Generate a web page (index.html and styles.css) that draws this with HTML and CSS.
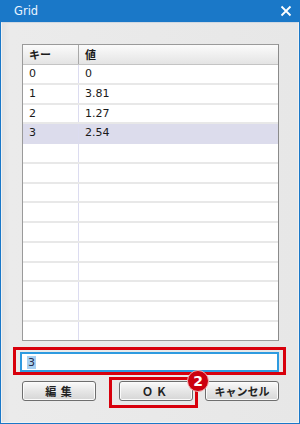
FILE: index.html
```html
<!DOCTYPE html>
<html>
<head>
<meta charset="utf-8">
<link rel="stylesheet" href="styles.css">
</head>
<body>
<div class="window">
  <div class="titlebar">
    <span class="title">Grid</span>
    <svg class="close" width="12" height="12" viewBox="0 0 12 12"><path d="M1.5 1.5 L10.5 10.5 M10.5 1.5 L1.5 10.5" stroke="#fff" stroke-width="1.8" fill="none"/></svg>
  </div>
  <div class="body">
    <div class="grid">
      <div class="row head"><div class="c1">キー</div><div class="c2">値</div></div>
      <div class="row"><div class="c1">0</div><div class="c2">0</div></div>
      <div class="row"><div class="c1">1</div><div class="c2">3.81</div></div>
      <div class="row"><div class="c1">2</div><div class="c2">1.27</div></div>
      <div class="row sel"><div class="c1">3</div><div class="c2">2.54</div></div>
      <div class="row"><div class="c1"></div><div class="c2"></div></div>
      <div class="row"><div class="c1"></div><div class="c2"></div></div>
      <div class="row"><div class="c1"></div><div class="c2"></div></div>
      <div class="row"><div class="c1"></div><div class="c2"></div></div>
      <div class="row"><div class="c1"></div><div class="c2"></div></div>
      <div class="row"><div class="c1"></div><div class="c2"></div></div>
      <div class="row"><div class="c1"></div><div class="c2"></div></div>
      <div class="row"><div class="c1"></div><div class="c2"></div></div>
      <div class="row"><div class="c1"></div><div class="c2"></div></div>
      <div class="row last"><div class="c1"></div><div class="c2"></div></div>
    </div>
    <div class="field"><span class="hl">3</span></div>
    <div class="buttons">
      <div class="btn">編 集</div>
      <div class="btn ok">ＯＫ<span class="badge">2</span></div>
      <div class="btn cancel">キャンセル</div>
    </div>
  </div>
</div>
</body>
</html>
```

FILE: styles.css
```css
* { box-sizing: border-box; }
html, body { margin: 0; padding: 0; }
body { width: 300px; height: 424px; overflow: hidden; font-family: "DejaVu Sans", "Noto Sans CJK JP", sans-serif; }
.window {
  width: 300px; height: 424px;
  background: #1a78c8;
  padding: 0 1px 1px 1px;
  display: flex; flex-direction: column;
}
.titlebar {
  height: 22px; flex: none;
  display: flex; align-items: center; justify-content: space-between;
  padding: 0 7px 0 13px;
}
.title { color: #eaf4ff; font-size: 11.5px; }
.close { display: block; }
.body {
  flex: 1;
  background: linear-gradient(to right, #e2e2e2 0, #ebebeb 8px, #e7e7e7 100%);
  border: 1px solid #f2f2f2;
  border-top-color: #cfd8e2;
  padding: 21px 19px 0 20px;
  display: flex; flex-direction: column;
}
.grid {
  height: 297px;
  border: 1px solid #9a9a9a;
  border-right-color: #8a8a8a;
  background: #fff;
  display: flex; flex-direction: column;
  overflow: hidden;
}
.row {
  display: flex; height: 19.75px; flex: none;
  border-bottom: 2px solid #e8e8e8;
  font-size: 11px; color: #1a1a1a;
}
.row.last { border-bottom: none; flex: 1; }
.row .c1 { width: 56px; border-right: 1px solid #dcdcf0; padding-left: 6px; line-height: 18px; }
.row .c2 { flex: 1; padding-left: 6px; line-height: 18px; }
.row.head {
  height: 20px;
  background: linear-gradient(#fbfbfb, #e4e4e4);
  border-bottom: 1px solid #c4c4c4;
  font-family: "Noto Sans CJK JP", sans-serif; font-weight: bold; font-size: 11px;
}
.row.head .c1 { border-right: 1px solid #a8a8a8; line-height: 19px; }
.row.head .c2 { line-height: 19px; }
.row.sel { background: #dcdcec; border-bottom-color: #dcdcec; }
.field {
  position: relative;
  margin: 11px 0 0 -2px;
  height: 20px;
  border: 2px solid #2e9be0;
  background: #fff;
  padding: 1px 0 0 5px;
  font-size: 11px; color: #2a2a4a; line-height: 15px;
}
.field::after {
  content: ""; position: absolute;
  left: -9px; top: -7px; right: -9px; bottom: -5px;
  border: 3px solid #d8000c;
}
.hl { background: #a6d0f2; padding: 0 1px; }
.buttons { display: flex; margin-top: 9px; height: 20px; }
.btn {
  position: relative;
  width: 74px; height: 20px;
  border: 1px solid #6e6e6e; border-radius: 3px;
  background: linear-gradient(#fafafa, #e6e6e6 50%, #d6d6d6);
  box-shadow: inset 0 0 0 1px #fbfbfb;
  font-family: "Noto Sans CJK JP", sans-serif; font-weight: bold; font-size: 11px; color: #222;
  display: flex; align-items: center; justify-content: center;
  letter-spacing: 1px;
}
.btn.ok { margin-left: 23px; letter-spacing: 3px; }
.btn.cancel { margin-left: 12px; letter-spacing: 0; }
.btn.ok::after {
  content: ""; position: absolute;
  left: -11px; top: -5px; right: -6px; bottom: -8px;
  border: 3px solid #d8000c;
}
.badge {
  position: absolute; z-index: 2;
  left: 67px; top: -12px;
  width: 22px; height: 22px; border-radius: 50%;
  background: #cc0010;
  border: 1px solid #f0b0b0;
  color: #fff; font-family: "DejaVu Sans", sans-serif; font-weight: bold; font-size: 14px;
  letter-spacing: 0;
  display: flex; align-items: center; justify-content: center;
}
```
